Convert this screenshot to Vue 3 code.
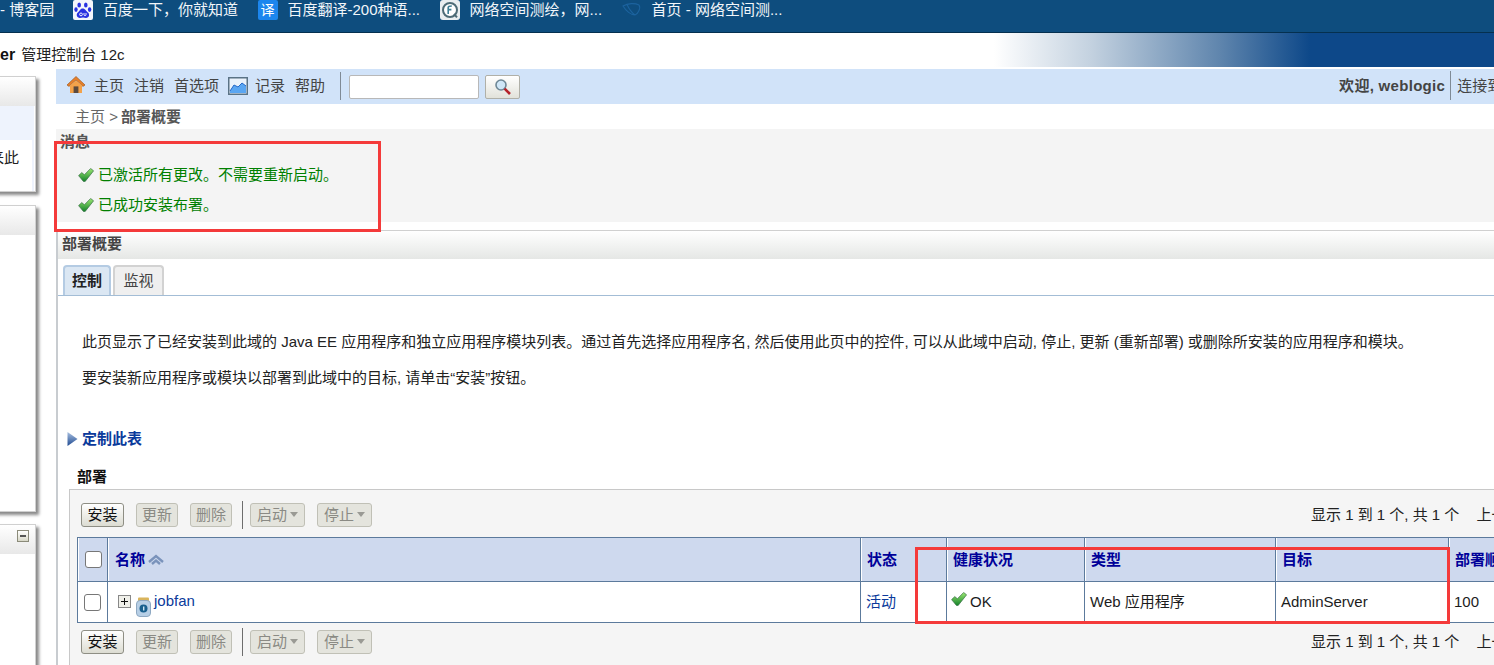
<script setup>
const sites = [
  { label: '百度一下，你就知道', icon: 'paw' },
  { label: '百度翻译-200种语...', icon: 'yi' },
  { label: '网络空间测绘，网...', icon: 'f' },
  { label: '首页 - 网络空间测...', icon: 'swirl' }
]
const messages = ['已激活所有更改。不需要重新启动。', '已成功安装布署。']
const columns = [
  { key: 'state', label: '状态' },
  { key: 'health', label: '健康状况' },
  { key: 'type', label: '类型' },
  { key: 'target', label: '目标' },
  { key: 'order', label: '部署顺序' }
]
const toolbars = ['top', 'bottom']
</script>

<template>
  <div class="root">
    <svg class="defs" width="0" height="0" aria-hidden="true">
      <defs>
        <linearGradient id="chk" x1="0" y1="0" x2="0" y2="1">
          <stop offset="0" stop-color="#9be872" />
          <stop offset="1" stop-color="#14822a" />
        </linearGradient>
        <symbol id="check" viewBox="0 0 16 14">
          <path d="M.6 7.6 L3.8 4.6 L6.4 6.8 L12.6 .5 L15.6 2.8 L7.2 13.4 L5.4 13.4 Z" fill="url(#chk)" stroke="#3a7048" stroke-width=".7" />
        </symbol>
      </defs>
    </svg>

    <nav class="bookmarks">
      <span class="bm first">- 博客园</span>
      <span v-for="s in sites" :key="s.label" class="bm">
        <svg v-if="s.icon === 'paw'" class="bm-icon" viewBox="0 0 20 20">
          <rect width="20" height="20" rx="2" fill="#f4f6fb" />
          <g fill="#2932e1">
            <ellipse cx="6.2" cy="5" rx="1.8" ry="2.6" />
            <ellipse cx="12.8" cy="5" rx="1.8" ry="2.6" />
            <ellipse cx="3" cy="9.6" rx="1.7" ry="2.4" />
            <ellipse cx="16.6" cy="9.6" rx="1.7" ry="2.4" />
            <path d="M9.6 8.4 C7 8.4 6.8 11 4.8 12.6 C2.8 14.4 3.8 18 7 18 C8 18 9 17.5 10 17.5 C11 17.5 12 18 13 18 C16.2 18 17 14.4 15 12.6 C13 11 12.4 8.4 9.6 8.4 Z" />
          </g>
          <circle cx="8" cy="14.4" r="1.4" fill="none" stroke="#fff" stroke-width=".9" />
          <path d="M11 13 V15 C11 15.8 13 15.8 13 15 V13" fill="none" stroke="#fff" stroke-width=".9" />
        </svg>
        <span v-else-if="s.icon === 'yi'" class="bm-icon yi">译</span>
        <svg v-else-if="s.icon === 'f'" class="bm-icon" viewBox="0 0 20 20">
          <rect width="20" height="20" rx="3" fill="#e9eef0" />
          <circle cx="10" cy="10" r="7" fill="#fff" stroke="#4d6b76" stroke-width="2" />
          <path d="M8.2 14 V7.4 C8.2 6.4 9 6 11.8 6 M8.2 9.6 H11.4" fill="none" stroke="#3f7f95" stroke-width="1.6" />
          <path d="M14 14 L17 17.4" stroke="#4d6b76" stroke-width="2" />
        </svg>
        <svg v-else class="bm-icon" viewBox="0 0 20 20">
          <path d="M1 6 C6 3 13 3 17 5 C19 8 16 14 13 15 C9 15 4 11 1 6 Z M5 4.6 C7 9 10 13 13 15" fill="none" stroke="#1c639f" stroke-width="1.1" />
        </svg>
        <span>{{ s.label }}</span>
      </span>
    </nav>

    <header class="brand"><b class="brand-name">er</b><span>管理控制台 12c</span></header>

    <div class="body">
      <aside class="side">
        <section class="side-panel p1">
          <div class="side-head"></div>
          <div class="side-blue"></div>
          <div class="side-text">来此</div>
        </section>
        <section class="side-panel p2"><div class="side-head"></div></section>
        <section class="side-panel p3">
          <div class="side-head">
            <span class="minus"></span>
          </div>
        </section>
      </aside>

      <main class="main">
        <div class="toolbar">
          <svg class="t-house" viewBox="0 0 20 20">
            <path d="M10 1.5 L19 10 L17 11.4 L10 5 L3 11.4 L1 10 Z" fill="#e8802a" stroke="#9c5a24" stroke-width=".7" />
            <path d="M4 10.6 L10 5.4 L16 10.6 V18 H4 Z" fill="#f3a24a" />
            <rect x="7.6" y="11.4" width="4.8" height="6.6" fill="#5b4a3e" />
          </svg>
          <span class="t-item">主页</span>
          <span class="t-item">注销</span>
          <span class="t-item">首选项</span>
          <svg class="t-log" viewBox="0 0 20 18">
            <rect x=".75" y=".75" width="18.5" height="16.5" fill="#eaf2fb" stroke="#5a7386" stroke-width="1.5" />
            <path d="M2 14 L6 8 L10 10 L14 6 L18 9 V16 H2 Z" fill="#5aa6f2" />
            <path d="M2 14 L6 8 L10 10 L14 6 L18 9" fill="none" stroke="#2468c8" />
          </svg>
          <span class="t-item">记录</span>
          <span class="t-item">帮助</span>
          <span class="t-sep"></span>
          <span class="search-input"></span>
          <span class="search-btn">
            <svg viewBox="0 0 18 18" width="18" height="18">
              <circle cx="7" cy="7" r="5" fill="#cfe6f7" stroke="#6e8796" stroke-width="1.6" />
              <path d="M10.6 10.6 L16 16" stroke="#b5222a" stroke-width="2.6" />
            </svg>
          </span>
          <span class="welcome"><b>欢迎, weblogic</b></span>
          <span class="conn">连接到</span>
        </div>

        <div class="crumb">主页 &gt;<b>部署概要</b></div>

        <section class="msgs">
          <h3 class="msgs-title">消息</h3>
          <p v-for="m in messages" :key="m" class="msg">
            <svg class="check"><use href="#check" /></svg>{{ m }}
          </p>
        </section>

        <section class="portlet">
          <h2 class="portlet-head">部署概要</h2>
          <div class="tabs">
            <span class="tab active">控制</span>
            <span class="tab">监视</span>
          </div>
          <div class="content">
            <p class="para p-first">此页显示了已经安装到此域的 Java EE 应用程序和独立应用程序模块列表。通过首先选择应用程序名, 然后使用此页中的控件, 可以从此域中启动, 停止, 更新 (重新部署) 或删除所安装的应用程序和模块。</p>
            <p class="para p-second">要安装新应用程序或模块以部署到此域中的目标, 请单击“安装”按钮。</p>
            <div class="customize">
              <svg viewBox="0 0 11 16" width="11" height="16">
                <defs>
                  <linearGradient id="tri" x1="0" y1="0" x2="0" y2="1">
                    <stop offset="0" stop-color="#a9c0e0" />
                    <stop offset="1" stop-color="#1f4a92" />
                  </linearGradient>
                </defs>
                <path d="M.5 1 L10.5 8 L.5 15 Z" fill="url(#tri)" />
              </svg>
              <span>定制此表</span>
            </div>
            <h3 class="tbl-title">部署</h3>
            <div class="box">
              <template v-for="(pos, i) in toolbars" :key="pos">
                <div class="actions">
                  <button class="btn on">安装</button>
                  <button class="btn off">更新</button>
                  <button class="btn off">删除</button>
                  <span class="a-sep"></span>
                  <button class="btn off drop">启动<i class="caret"></i></button>
                  <button class="btn off drop">停止<i class="caret"></i></button>
                  <span class="pager">显示 1 到 1 个, 共 1 个<span class="prev">上一</span></span>
                </div>
                <table v-if="i === 0" class="tbl">
                  <colgroup>
                    <col class="c-check" /><col class="c-name" /><col class="c-state" />
                    <col class="c-health" /><col class="c-type" /><col class="c-target" /><col class="c-order" />
                  </colgroup>
                  <thead>
                    <tr>
                      <th><span class="cb"></span></th>
                      <th class="th-first">
                        <span class="th-name">名称
                          <svg viewBox="0 0 16 11" width="16" height="11">
                            <path d="M1 8 L8 2 L15 8 M4 10 L8 6.5 L12 10" fill="none" stroke="#7a93bb" stroke-width="2.4" />
                          </svg>
                        </span>
                      </th>
                      <th v-for="c in columns" :key="c.key">{{ c.label }}</th>
                    </tr>
                  </thead>
                  <tbody>
                    <tr>
                      <td><span class="cb"></span></td>
                      <td>
                        <div class="name-cell">
                          <span class="plus"></span>
                          <svg class="jar" viewBox="0 0 15 20">
                            <rect x="2" y=".5" width="11" height="4" rx="1" fill="#d9b45c" />
                            <rect x=".5" y="3.5" width="14" height="16" rx="3.5" fill="#b7cfe6" stroke="#8ea8c2" />
                            <circle cx="7.5" cy="11.5" r="4" fill="#19608e" />
                            <rect x="7" y="9.5" width="1.4" height="4" fill="#cbe6f4" />
                          </svg>
                          <a class="link">jobfan</a>
                        </div>
                      </td>
                      <td><a class="link">活动</a></td>
                      <td class="ok"><svg class="check"><use href="#check" /></svg>OK</td>
                      <td>Web 应用程序</td>
                      <td>AdminServer</td>
                      <td>100</td>
                    </tr>
                  </tbody>
                </table>
              </template>
            </div>
          </div>
        </section>
      </main>
    </div>

    <div class="mark mark-a"></div>
    <div class="mark mark-b"></div>
  </div>
</template>

<style>
html, body { margin: 0; background: #fff; overflow: hidden; }
</style>

<style scoped>
.root {
  position: relative;
  width: 1494px;
  height: 665px;
  overflow: hidden;
  background: #fff;
  font: 15px/20px "Liberation Sans", "Noto Sans CJK SC", sans-serif;
  color: #222;
  white-space: nowrap;
}
.defs { position: absolute; }
p, h2, h3 { margin: 0; font-size: 15px; }

.bookmarks {
  height: 32px;
  border-bottom: 1px solid #05304f;
  background: #0e4d7e;
  color: #f2f6fa;
  display: flex;
  align-items: center;
  gap: 19.5px;
}
.bm { display: flex; align-items: center; gap: 10px; position: relative; top: -6px; }
.first { width: 53.5px; }
.bm-icon { width: 20px; height: 20px; flex: none; }
.yi {
  background: #1c86ee;
  border-radius: 2px;
  color: #fff;
  font-size: 14px;
  line-height: 20px;
  text-align: center;
}

.brand {
  height: 34px;
  box-sizing: border-box;
  padding-top: 12px;
  background: linear-gradient(90deg, #fff 994px, #c4d2e0 1090px, #5f85ad 1220px, #0d4889 1310px);
  display: flex;
  gap: 6px;
  color: #222;
  margin-bottom: 2px;
}
.brand-name { color: #111; font-size: 16px; }

.body { display: grid; grid-template-columns: 56px 1480px; }

.side { padding-top: 7px; }
.side-panel {
  width: 46px;
  margin-left: -10px;
  box-sizing: border-box;
  border: 1px solid #d0d0d0;
  background: #fff;
  box-shadow: 3px 3px 3px #8a8a8a;
  overflow: hidden;
}
.p1 { height: 116px; margin-bottom: 13px; }
.p2 { height: 307px; margin-bottom: 12px; }
.p3 { height: 200px; }
.side-head {
  height: 29px;
  background: linear-gradient(#fff, #e8e8e8);
  position: relative;
}
.side-blue { height: 34px; background: #eef3fd; margin-right: 1px; }
.side-text {
  height: 51px;
  box-sizing: border-box;
  padding-top: 8px;
  border-right: 2px solid #eef3fd;
  margin-right: 1px;
  direction: rtl;
  padding-right: 13px;
}
.minus {
  position: absolute;
  left: 26px;
  top: 5px;
  width: 10px;
  height: 10px;
  border: 1px solid #8b8b7a;
  background: linear-gradient(#fff, #d8d8c8);
}
.minus::before {
  content: "";
  position: absolute;
  left: 2px;
  right: 2px;
  top: 4px;
  height: 2px;
  background: #555;
}

.toolbar {
  height: 35px;
  background: #d1e3f9;
  display: flex;
  align-items: center;
  color: #444;
  padding-left: 10px;
}
.t-house { width: 20px; height: 20px; margin: 0 8px 3px 0; flex: none; }
.t-item { margin: 0 10px 2px 0; }
.t-log { width: 20px; height: 18px; margin: 0 7px 2px -1px; flex: none; }
.t-sep { width: 1px; height: 28px; background: #7f8a96; margin: 0 8px 2px 5px; }
.search-input {
  width: 128px;
  height: 22px;
  border: 1px solid #b8b8b8;
  border-radius: 2px;
  background: #fff;
  margin-right: 6px;
}
.search-btn {
  width: 33px;
  height: 22px;
  border: 1px solid #b0b0a8;
  border-radius: 2px;
  background: linear-gradient(#fff, #e2e2da);
  display: flex;
  align-items: center;
  justify-content: center;
}
.welcome { margin: 0 0 2px 819px; padding-right: 5px; border-right: 1px solid #7f8a96; line-height: 29px; letter-spacing: .3px; }
.conn { margin: 0 0 2px 6px; }

.crumb { height: 25px; line-height: 25px; padding-left: 19px; color: #666; }
.crumb b { color: #555; margin-left: 3px; }

.msgs { height: 93px; background: #f4f4f4; padding-left: 4px; box-sizing: border-box; padding-top: 3px; }
.msgs-title { color: #555; height: 28px; }
.msg { display: flex; align-items: center; color: #008000; height: 30px; padding-left: 18px; }
.check { width: 16px; height: 14px; margin-right: 4px; flex: none; }

.portlet { margin-top: 8px; border-left: 2px solid #c8ccd0; }
.portlet-head {
  height: 29px;
  line-height: 26px;
  padding-left: 4px;
  box-sizing: border-box;
  background: linear-gradient(#fff, #e5e7e5);
  border-top: 1px solid #d0d0d0;
  color: #444;
}
.tabs {
  height: 37px;
  box-sizing: border-box;
  padding: 6px 0 0 5px;
  display: flex;
  gap: 2px;
  border-bottom: 1px solid #a3bdd6;
}
.tab {
  width: 51px;
  height: 30px;
  box-sizing: border-box;
  text-align: center;
  line-height: 27px;
  border: 2px solid #d2d2d2;
  border-bottom: 0;
  border-radius: 4px 4px 0 0;
  background: #efefef;
  color: #444;
}
.tab.active {
  width: 48px;
  font-weight: 700;
  color: #222;
  background: #dbe7f3;
  border-color: #b4cbe3;
}
.content { padding-left: 11px; }
.para { color: #222; padding-left: 13px; }
.p-first { padding-top: 36px; }
.p-second { padding-top: 16px; }
.customize {
  margin: 41px 0 0 -2px;
  display: flex;
  align-items: center;
  gap: 4px;
  color: #0b3a9b;
  font-weight: 700;
}
.tbl-title { padding: 18px 0 0 8px; color: #111; height: 40px; box-sizing: border-box; line-height: 20px; }
.box {
  width: 1460px;
  box-sizing: border-box;
  border: 1px solid #c8c8c8;
  background: #f5f5f5;
  padding: 12px 0 0 7px;
  height: 200px;
}
.actions { display: flex; align-items: center; height: 25px; margin-left: 4px; gap: 12px; }
.btn {
  font: inherit;
  height: 24px;
  padding: 0;
  box-sizing: border-box;
  border-radius: 3px;
  width: 42px;
  line-height: 20px;
  display: flex;
  align-items: center;
  justify-content: center;
}
.on { width: 43px; border: 1px solid #8e8e84; background: linear-gradient(#fff, #dcdcd2); color: #111; }
.off { background: #e4e4dd; border: 1px solid #c0c0b6; color: #8a8a84; }
.drop { width: 55px; gap: 3px; }
.caret {
  width: 0;
  height: 0;
  border: 4px solid transparent;
  border-top: 5px solid #9a9a94;
  border-bottom: 0;
}
.a-sep { width: 1px; height: 28px; background: #6d6d6d; margin: 0 -5px 0 -2px; }
.pager { margin-left: auto; width: 217px; color: #222; }
.prev { margin-left: 17px; }

.tbl {
  table-layout: fixed;
  width: 1440px;
  border-collapse: collapse;
  margin: 10px 0 6px;
  background: #fff;
}
.c-check { width: 30px; }
.c-name { width: 753px; }
.c-state { width: 86px; }
.c-health { width: 138px; }
.c-type { width: 191px; }
.c-target { width: 173px; }
.c-order { width: 69px; }
.tbl th, .tbl td { border: 1px solid #5c7a9c; padding: 0 7px; text-align: left; font-weight: 400; }
.tbl th {
  height: 43px;
  padding-left: 6px;
  background: #ced9ee;
  color: #000099;
  font-weight: 700;
  box-shadow: inset 1px 0 0 #fff;
}
.tbl .th-first { padding-left: 7px; }
.tbl td { height: 40px; color: #1c1c1c; padding-left: 5px; }
.tbl th:first-child { padding: 0 0 0 7px; }
.tbl td:first-child { padding: 0 0 0 6px; }
.th-name { display: flex; align-items: center; gap: 3px; }
.cb {
  display: block;
  width: 15px;
  height: 15px;
  border: 1px solid #777;
  border-radius: 3px;
  background: #fff;
}
.name-cell { display: flex; align-items: flex-start; padding: 5px 0 0 5px; height: 30px; box-sizing: border-box; }
.plus {
  width: 11px;
  height: 11px;
  border: 1px solid #888;
  background: #f0f0ea;
  position: relative;
  margin: 3px 5px 0 0;
  flex: none;
}
.plus::before { content: ""; position: absolute; left: 2px; right: 2px; top: 5px; height: 1px; background: #111; }
.plus::after { content: ""; position: absolute; top: 2px; bottom: 2px; left: 5px; width: 1px; background: #111; }
.jar { width: 15px; height: 20px; margin: 5px 3px 0 0; flex: none; }
.name-cell .link { margin-top: -1px; }
.link { color: #0b3a9b; }
.tbl .ok { padding-left: 4px; }
.ok .check { margin: 0 3px 0 0; vertical-align: -1px; position: relative; top: -2px; }

.mark { position: absolute; border: 3px solid #f43a3a; box-sizing: border-box; pointer-events: none; }
.mark-a { left: 54px; top: 141px; width: 327px; height: 91px; }
.mark-b { left: 915px; top: 547px; width: 535px; height: 77px; }
</style>
